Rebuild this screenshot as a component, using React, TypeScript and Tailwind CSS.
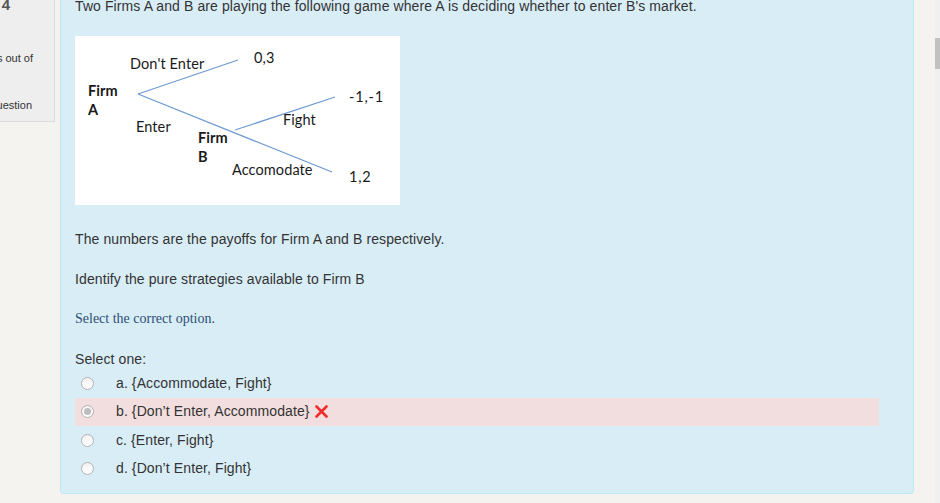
import React from 'react';

const options = [
  { key: 'a', label: 'a. {Accommodate, Fight}', checked: false },
  { key: 'b', label: 'b. {Don\u2019t Enter, Accommodate}', checked: true, wrong: true },
  { key: 'c', label: 'c. {Enter, Fight}', checked: false },
  { key: 'd', label: 'd. {Don\u2019t Enter, Fight}', checked: false },
];

function GameTree() {
  return (
    <div className="mt-[21px] h-[169px] w-[325px] bg-white">
      <svg width="325" height="169" viewBox="0 0 325 169" style={{ fontFamily: 'Lato, "Open Sans", sans-serif' }}>
        <g stroke="#6e9bd3" strokeWidth="1.3" fill="none">
          <line x1="63" y1="58" x2="163" y2="24" />
          <line x1="63" y1="58" x2="257" y2="136" />
          <line x1="160" y1="94" x2="260" y2="61" />
        </g>
        <g fill="#1a1a1a" fontSize="14.5">
          <text x="55" y="33">Don't Enter</text>
          <text x="179" y="27">0,3</text>
          <text x="13" y="60" fontWeight="bold">Firm</text>
          <text x="13" y="79" fontWeight="bold">A</text>
          <text x="61" y="96">Enter</text>
          <text x="123" y="107" fontWeight="bold">Firm</text>
          <text x="123" y="126" fontWeight="bold">B</text>
          <text x="208" y="89">Fight</text>
          <text x="274" y="66" letterSpacing="0.8">-1,-1</text>
          <text x="157" y="139">Accomodate</text>
          <text x="274" y="146" letterSpacing="0.8">1,2</text>
        </g>
      </svg>
    </div>
  );
}

function Radio({ checked }: { checked: boolean }) {
  return (
    <span className="flex h-[13px] w-[13px] items-center justify-center rounded-full border border-[#b3b3b3] bg-gradient-to-b from-[#f2f2f2] to-white">
      {checked && <span className="h-[7px] w-[7px] rounded-full bg-[#bdbdbd]" />}
    </span>
  );
}

export default function App() {
  return (
    <div
      className="flex h-[503px] w-[940px] overflow-hidden bg-[#f4f3ef] text-[14px] tracking-[0.1px] text-[#333]"
      style={{ fontFamily: '"Liberation Sans", Arial, sans-serif' }}
    >
      <div className="w-[55px] shrink-0 overflow-hidden">
        <div className="flex h-[122px] flex-col border-r border-b border-[#dcdcdc] bg-[#eeeeee] text-[11px] tracking-normal">
          <div className="mt-[-6px] flex justify-end whitespace-nowrap pr-[44px] text-[15px] font-bold text-[#555]">
            Question 4
          </div>
          <div className="mt-[33px] flex justify-end whitespace-nowrap pr-[21px]">Marks out of</div>
          <div className="mt-[31px] flex justify-end whitespace-nowrap pr-[22px]">Flag question</div>
        </div>
      </div>

      <div className="ml-[5px] h-[494px] w-[854px] shrink-0 rounded-b-[4px] border border-t-0 border-[#bce8f1] bg-[#d9edf7] pl-[14px] pr-[34px]">
        <p className="mt-[-3px] leading-[18px]">
          Two Firms A and B are playing the following game where A is deciding whether to enter B's market.
        </p>
        <GameTree />
        <p className="mt-[25px] leading-[18px]">The numbers are the payoffs for Firm A and B respectively.</p>
        <p className="mt-[22px] leading-[18px]">Identify the pure strategies available to Firm B</p>
        <p
          className="mt-[22px] text-[14px] leading-[18px] tracking-normal text-[#2c4f74]"
          style={{ fontFamily: '"Liberation Serif", "Times New Roman", serif' }}
        >
          Select the correct option.
        </p>
        <p className="mt-[22px] leading-[18px]">Select one:</p>
        <div className="mt-[1px]">
          {options.map((o) => (
            <div
              key={o.key}
              className={`flex h-[28.5px] items-center pl-[6px] ${o.wrong ? 'bg-[#f2dede]' : ''}`}
            >
              <Radio checked={o.checked} />
              <span className="ml-[22px]">{o.label}</span>
              {o.wrong && (
                <svg className="ml-[5px]" width="13" height="13" viewBox="0 0 13 13">
                  <path d="M1.5 1.5 L11.5 11.5 M11.5 1.5 L1.5 11.5" stroke="#f02c2c" strokeWidth="2.6" strokeLinecap="round" />
                </svg>
              )}
            </div>
          ))}
        </div>
      </div>

      <div className="flex-1" />
      <div className="w-[5px] shrink-0 bg-[#f0f0f0]">
        <div className="mt-[38px] h-[31px] bg-[#c1c1c1]" />
      </div>
    </div>
  );
}
